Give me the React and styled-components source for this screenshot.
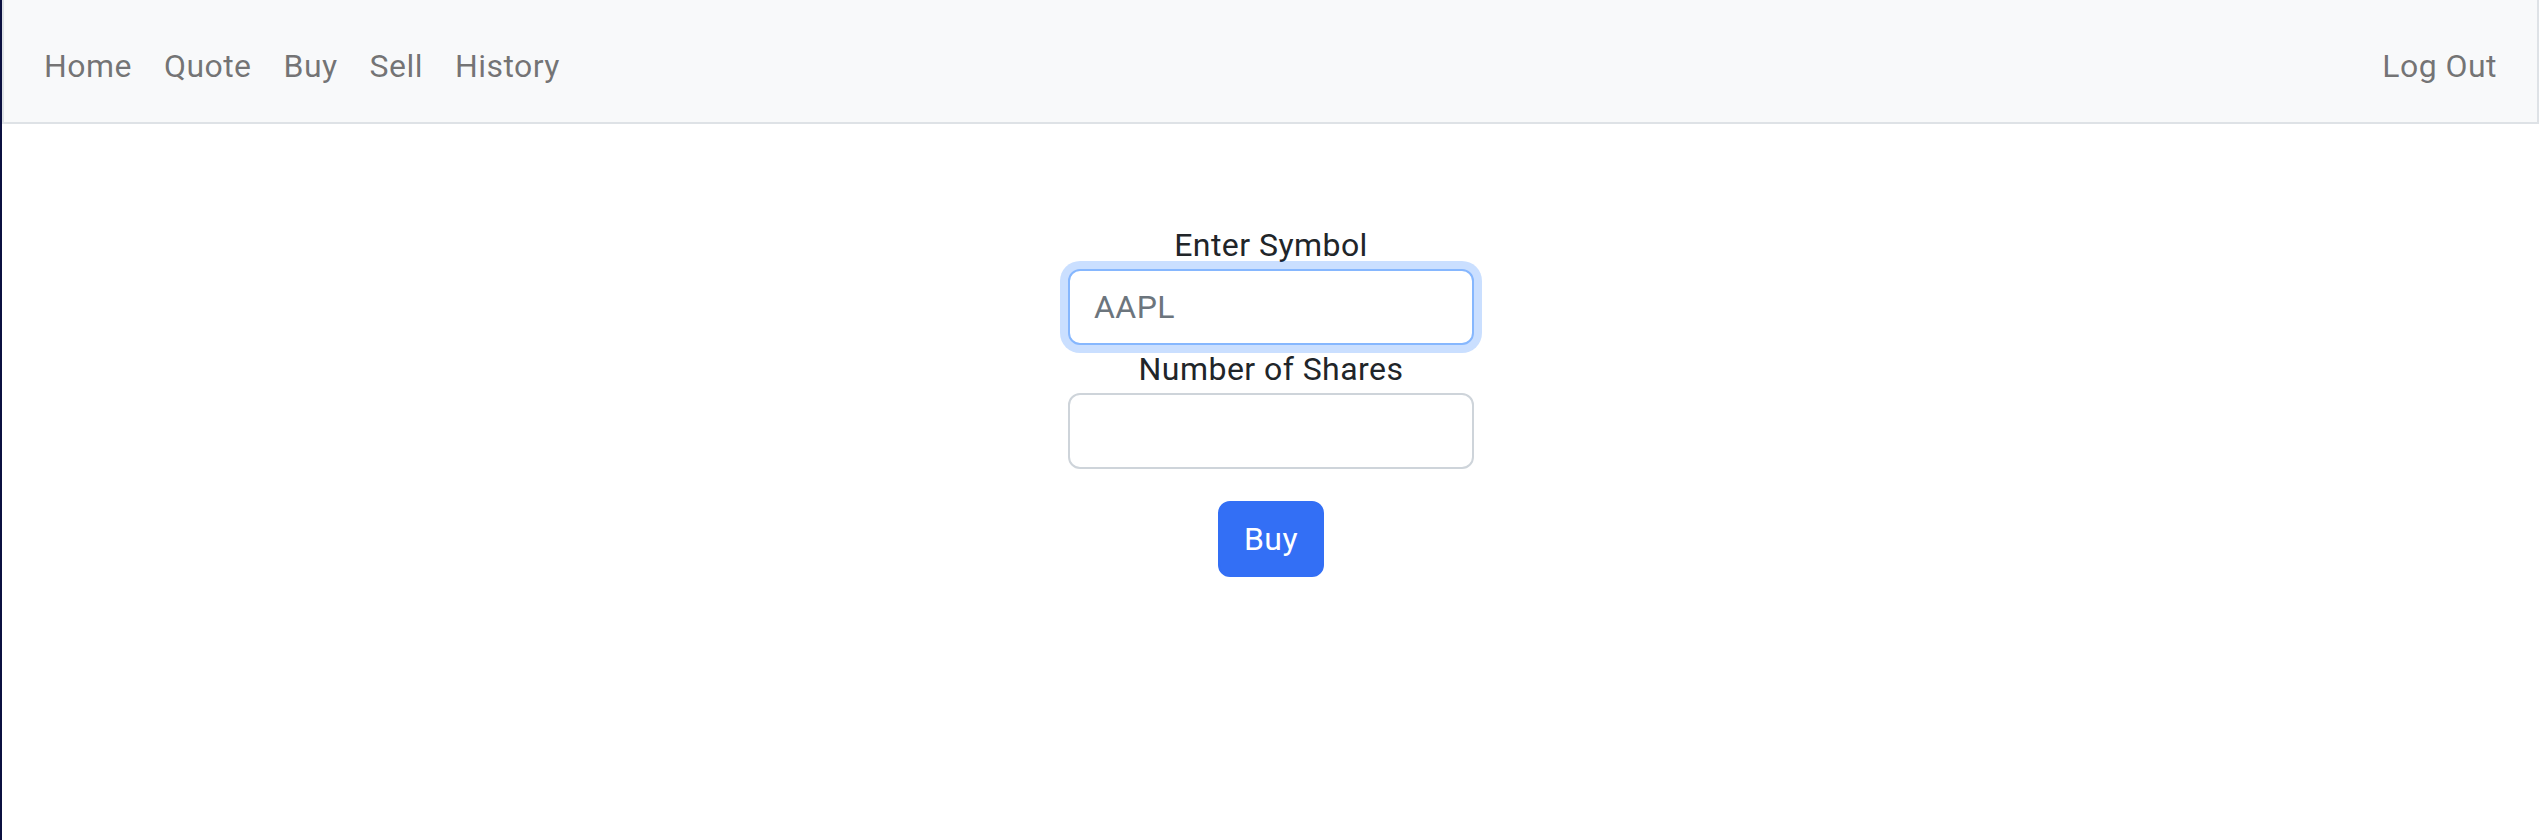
import React from 'react'
import styled, { createGlobalStyle } from 'styled-components'

const GlobalStyle = createGlobalStyle`
  html, body {
    margin: 0;
    padding: 0;
    background: #ffffff;
  }
  body {
    font-family: Roboto, "Liberation Sans", Arial, sans-serif;
    font-size: 32px;
    line-height: 1.5;
    letter-spacing: 0.45px;
    color: #212529;
  }
  * { box-sizing: border-box; }
`

const Page = styled.div`
  min-height: 840px;
  border-left: 2px solid #0b1040;
  background: #ffffff;
`

const Navbar = styled.nav`
  display: flex;
  align-items: center;
  justify-content: space-between;
  height: 124px;
  padding: 10px 24px 0 24px;
  background-color: #f8f9fa;
  border: 2px solid #dee2e6;
  border-top: none;
  margin-right: 1px;
`

const NavList = styled.ul`
  display: flex;
  list-style: none;
  margin: 0;
  padding: 0;
`

const NavLink = styled.a`
  display: block;
  padding: 16px 16px;
  font-size: 32px;
  line-height: 48px;
  color: rgba(0, 0, 0, 0.55);
  text-decoration: none;
  cursor: pointer;
  &:hover {
    color: rgba(0, 0, 0, 0.7);
  }
`

const Main = styled.main`
  display: flex;
  justify-content: center;
  padding-top: 97px;
`

const Form = styled.form`
  display: flex;
  flex-direction: column;
  align-items: center;
  width: 406px;
`

const Label = styled.label`
  display: block;
  font-size: 32px;
  line-height: 48px;
  color: #212529;
  text-align: center;
`

const Input = styled.input`
  display: block;
  width: 100%;
  height: 76px;
  padding: 12px 24px;
  font-family: inherit;
  font-size: 32px;
  line-height: 48px;
  letter-spacing: 0.45px;
  color: #212529;
  background: #ffffff;
  border: 2px solid ${p => (p.$focused ? '#86b7fe' : '#ced4da')};
  border-radius: 12px;
  outline: none;
  box-shadow: ${p => (p.$focused ? '0 0 0 8px rgba(13, 110, 253, 0.22)' : 'none')};
  &::placeholder {
    color: #6c757d;
  }
`

const Button = styled.button`
  margin-top: 32px;
  padding: 12px 24px;
  font-family: inherit;
  font-size: 32px;
  line-height: 48px;
  letter-spacing: 0.45px;
  color: #ffffff;
  background-color: #336ff5;
  border: 2px solid #336ff5;
  border-radius: 12px;
  cursor: pointer;
`

const links = ['Home', 'Quote', 'Buy', 'Sell', 'History']

export default function App() {
  return (
    <Page>
      <GlobalStyle />
      <Navbar>
        <NavList>
          {links.map(l => (
            <li key={l}>
              <NavLink>{l}</NavLink>
            </li>
          ))}
        </NavList>
        <NavList>
          <li>
            <NavLink>Log Out</NavLink>
          </li>
        </NavList>
      </Navbar>
      <Main>
        <Form onSubmit={e => e.preventDefault()}>
          <Label htmlFor="symbol">Enter Symbol</Label>
          <Input id="symbol" placeholder="AAPL" $focused />
          <Label htmlFor="shares">Number of Shares</Label>
          <Input id="shares" type="number" />
          <Button type="submit">Buy</Button>
        </Form>
      </Main>
    </Page>
  )
}
